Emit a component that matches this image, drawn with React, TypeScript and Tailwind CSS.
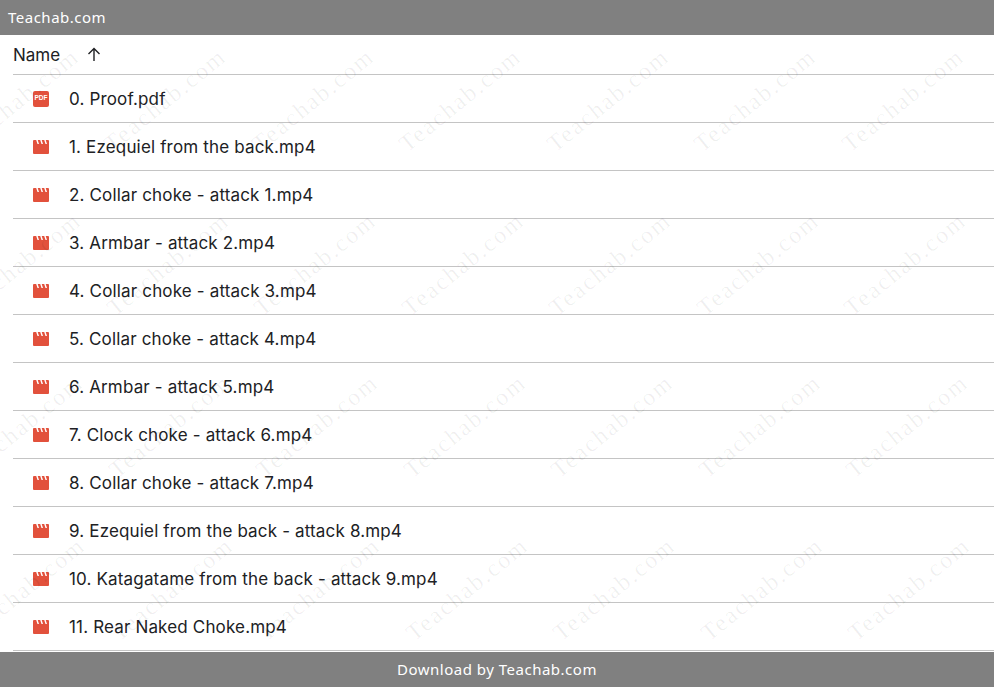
import React from 'react';

const files = [
  '1. Ezequiel from the back.mp4',
  '2. Collar choke - attack 1.mp4',
  '3. Armbar - attack 2.mp4',
  '4. Collar choke - attack 3.mp4',
  '5. Collar choke - attack 4.mp4',
  '6. Armbar - attack 5.mp4',
  '7. Clock choke - attack 6.mp4',
  '8. Collar choke - attack 7.mp4',
  '9. Ezequiel from the back - attack 8.mp4',
  '10. Katagatame from the back - attack 9.mp4',
  '11. Rear Naked Choke.mp4',
];

const PdfIcon = () => (
  <div className="w-4 h-4 rounded-[2px] bg-[#e2513c] flex items-center justify-center">
    <span className="text-[6.5px] leading-none font-bold text-white font-['Liberation_Sans',sans-serif]">PDF</span>
  </div>
);

const VideoIcon = () => (
  <svg className="block" width="16" height="14" viewBox="0 0 16 14">
    <rect width="16" height="14" rx="1" fill="#e2513c" />
    <path fill="#fff" d="M3.200 0h1.500l1.300 4H4.500zM7.200 0h1.500l1.300 4H8.500zM11.200 0h1.500l1.300 4h-1.500z" />
  </svg>
);

const Row: React.FC<{ name: string; icon: React.ReactNode }> = ({ name, icon }) => (
  <div className="h-12 flex items-center border-b border-[#c4c4c4] pl-[20px]">
    <div className="w-[36px] shrink-0">{icon}</div>
    <span className="pt-[2px] text-[17px] text-[#202124] font-['Inter',sans-serif] tracking-[0.16px]">{name}</span>
  </div>
);

// watermark rows: the layer repeats every 148px, each lower row a few px further right
const marks: { x: number; y: number }[] = [];
[
  [100, 17.5],
  [264, 20],
  [425.5, 22],
  [588.5, 24],
].forEach(([y, x0]) => {
  for (let i = 0; i < 7; i++) marks.push({ x: x0 + i * 147.5, y });
});

export default function App() {
  return (
    <div className="relative w-full h-[687px] overflow-hidden bg-white flex flex-col">
      <div className="h-[35px] shrink-0 bg-[#808080] flex items-center pl-2">
        <span className="text-[15px] text-white font-['Noto_Sans',sans-serif] tracking-[0.5px]">Teachab.com</span>
      </div>

      <div className="flex-1 pl-[13px]">
        <div className="h-10 flex items-center border-b border-[#c4c4c4]">
          <span className="pt-[2px] text-[17px] text-[#202124] font-['Inter',sans-serif]">Name</span>
          <svg className="ml-[26px]" width="16" height="16" viewBox="0 0 16 16" fill="none" stroke="#202124" strokeWidth="1.4">
            <path d="M8 14V2M2.500 7 8 1.500 13.500 7" />
          </svg>
        </div>
        <Row name="0. Proof.pdf" icon={<PdfIcon />} />
        {files.map(f => (
          <Row key={f} name={f} icon={<VideoIcon />} />
        ))}
      </div>

      <div className="h-[35px] shrink-0 bg-[#808080] flex items-center justify-center">
        <span className="text-[15px] text-white font-['Noto_Sans',sans-serif] tracking-[0.5px]">Download by Teachab.com</span>
      </div>

      <div className="absolute inset-x-0 top-[35px] bottom-[35px] overflow-hidden pointer-events-none">
        {marks.map((m, i) => (
          <span
            key={i}
            className="absolute text-[24px] leading-none tracking-[2px] whitespace-nowrap text-[#00000010] -rotate-[39deg] -translate-x-1/2 -translate-y-1/2 font-['Liberation_Serif',serif]"
            style={{ left: m.x, top: m.y - 35 }}
          >
            Teachab.com
          </span>
        ))}
      </div>
    </div>
  );
}
